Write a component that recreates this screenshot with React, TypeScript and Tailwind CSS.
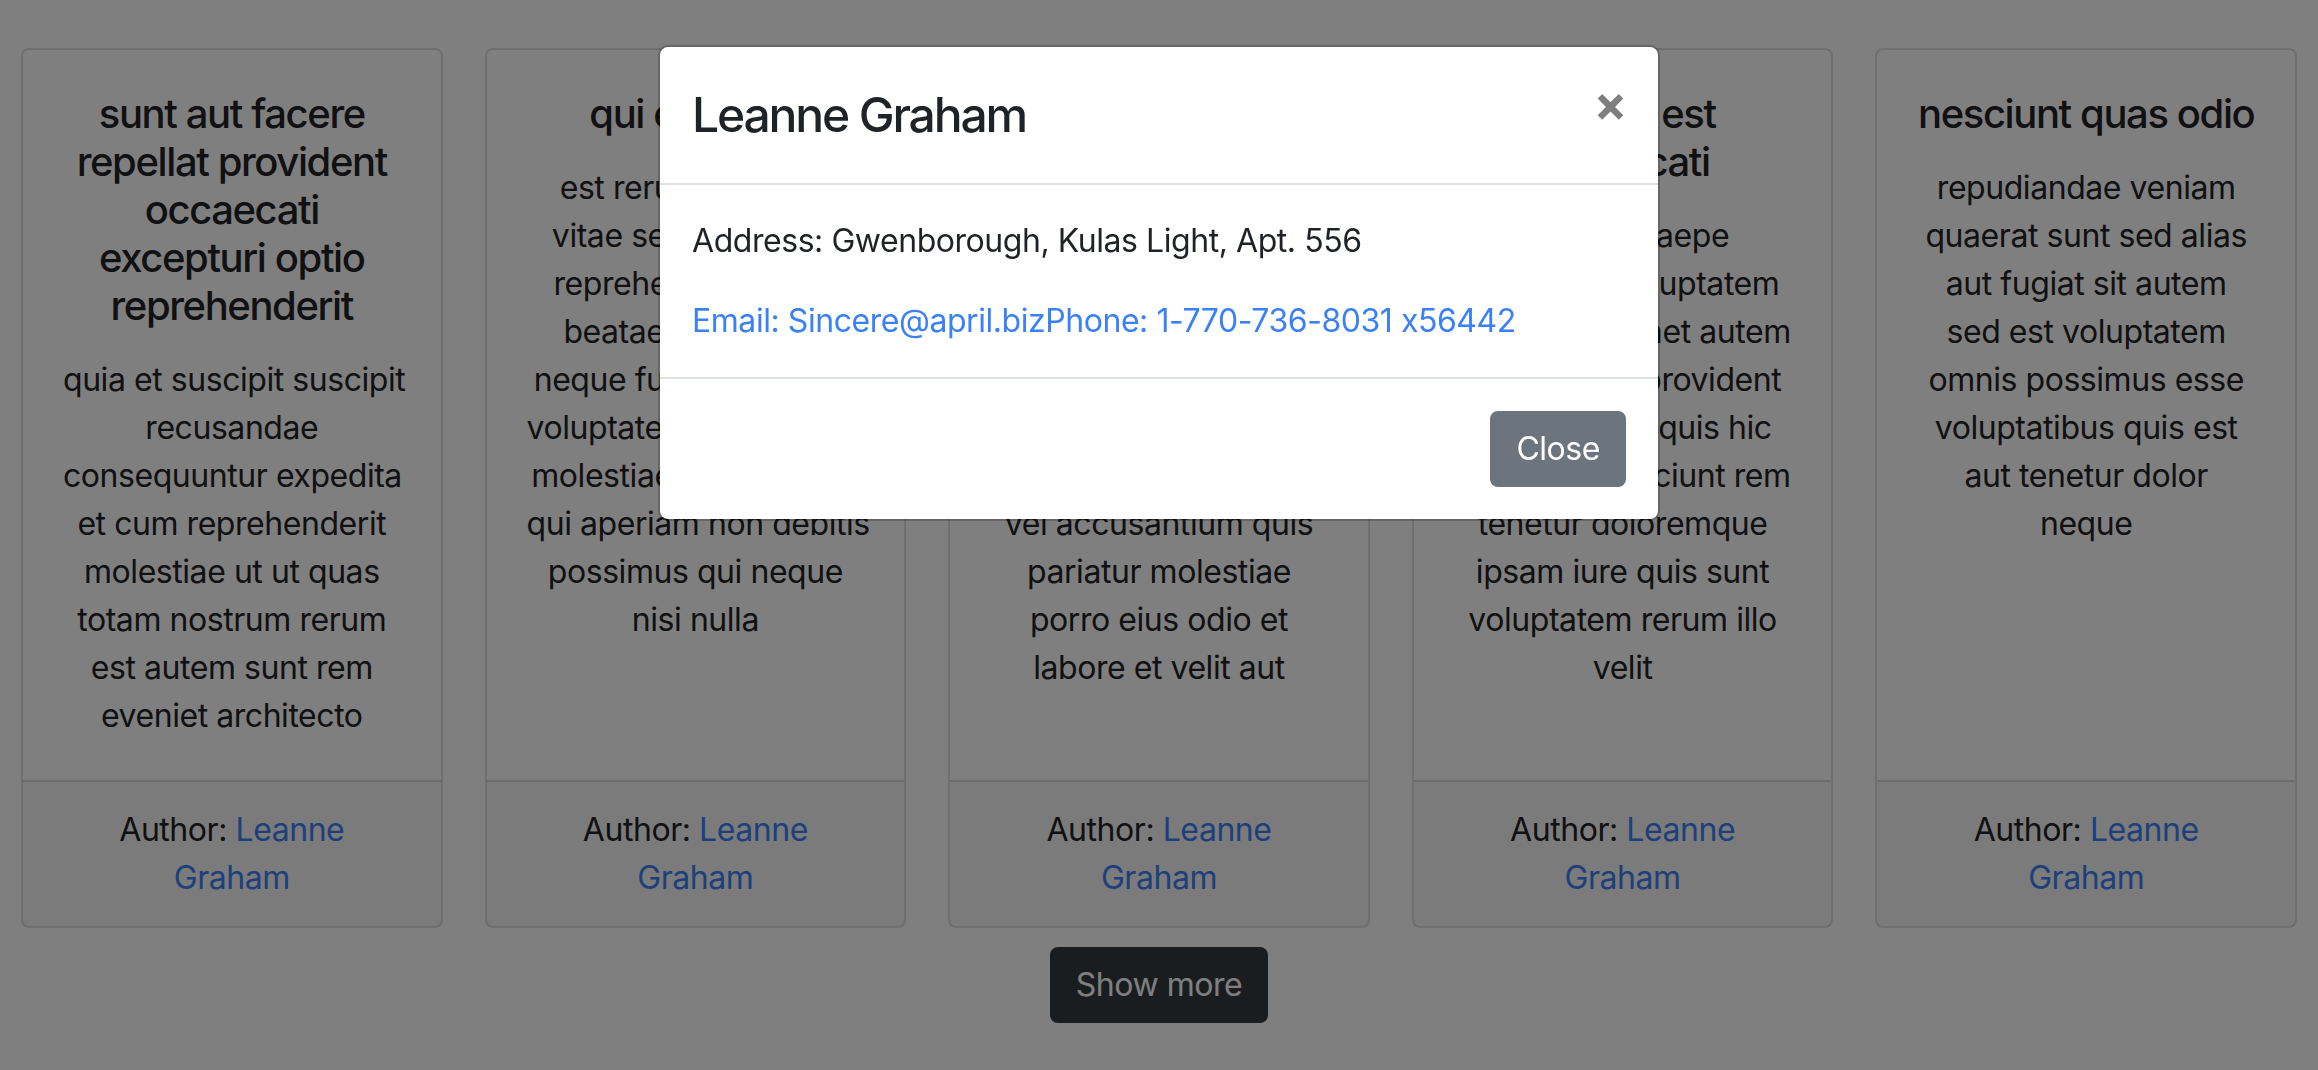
import React from 'react';

type Post = {
  title: string[];
  body: string[];
};

const posts: Post[] = [
  {
    title: ['sunt aut facere', 'repellat provident', 'occaecati', 'excepturi optio', 'reprehenderit'],
    body: [
      'quia et suscipit suscipit',
      'recusandae',
      'consequuntur expedita',
      'et cum reprehenderit',
      'molestiae ut ut quas',
      'totam nostrum rerum',
      'est autem sunt rem',
      'eveniet architecto',
    ],
  },
  {
    title: ['qui est esse'],
    body: [
      'est rerum tempore',
      'vitae sequi sint nihil',
      'reprehenderit dolor',
      'beatae ea dolores',
      'neque fugiat blanditiis',
      'voluptate porro vel nihil',
      'molestiae ut reiciendis',
      'qui aperiam non debitis',
      'possimus qui neque',
      'nisi nulla',
    ],
  },
  {
    title: ['ea molestias quasi', 'exercitationem', 'repellat qui ipsa', 'sit aut'],
    body: [
      'et iusto sed quo iure',
      'voluptatem occaecati',
      'omnis eligendi aut ad',
      'voluptatem doloribus',
      'vel accusantium quis',
      'pariatur molestiae',
      'porro eius odio et',
      'labore et velit aut',
    ],
  },
  {
    title: ['eum et est', 'occaecati'],
    body: [
      'ullam et saepe',
      'reiciendis voluptatem',
      'adipisci sit amet autem',
      'assumenda provident',
      'rerum culpa quis hic',
      'commodi nesciunt rem',
      'tenetur doloremque',
      'ipsam iure quis sunt',
      'voluptatem rerum illo',
      'velit',
    ],
  },
  {
    title: ['nesciunt quas odio'],
    body: [
      'repudiandae veniam',
      'quaerat sunt sed alias',
      'aut fugiat sit autem',
      'sed est voluptatem',
      'omnis possimus esse',
      'voluptatibus quis est',
      'aut tenetur dolor',
      'neque',
    ],
  },
];

const Lines: React.FC<{ lines: string[] }> = ({ lines }) => (
  <>
    {lines.map((l, i) => (
      <React.Fragment key={i}>
        {i > 0 && <br />}
        {l}
      </React.Fragment>
    ))}
  </>
);

const PostCard: React.FC<{ post: Post }> = ({ post }) => (
  <div className="flex flex-col rounded-[8px] border-2 border-[rgba(0,0,0,0.125)] bg-white text-center">
    <div className="flex-1 p-[40px]">
      <h5 className="mb-[26px] whitespace-nowrap text-[40px] font-medium leading-[48px] tracking-[-0.035em]">
        <Lines lines={post.title} />
      </h5>
      <p className="whitespace-nowrap text-[32px] leading-[48px]">
        <Lines lines={post.body} />
      </p>
    </div>
    <div className="border-t-2 border-[rgba(0,0,0,0.125)] bg-[rgba(0,0,0,0.03)] px-[40px] py-[24px] text-[32px] leading-[48px]">
      Author: <a className="text-[#3a80f6]">Leanne</a>
      <br />
      <a className="text-[#3a80f6]">Graham</a>
    </div>
  </div>
);

export default function App() {
  return (
    <div className="relative min-h-[1070px] w-full bg-white text-[#1f2226] tracking-[-0.028em] [font-variant-ligatures:no-contextual] font-['Inter','Liberation_Sans',sans-serif]">
      <div className="px-[21px] pt-[48px]">
        <div className="grid grid-cols-5 gap-x-[42px]">
          {posts.map((p, i) => (
            <PostCard key={i} post={p} />
          ))}
        </div>
        <div className="mt-[19px] flex justify-center">
          <button className="rounded-[8px] border-2 border-[#343a40] bg-[#343a40] px-[24px] py-[12px] text-[32px] leading-[48px] text-white">
            Show more
          </button>
        </div>
      </div>

      {/* backdrop */}
      <div className="fixed inset-0 bg-black/50" />

      {/* modal */}
      <div className="fixed inset-0 flex justify-center pt-[45px]">
        <div className="h-fit w-[1002px] rounded-[10px] border-2 border-[rgba(0,0,0,0.2)] bg-white bg-clip-padding">
          <div className="flex items-start border-b-2 border-[#dee2e6] p-[32px]">
            <h4 className="text-[48px] font-medium leading-[72px] tracking-[-0.045em]">Leanne Graham</h4>
            <button className="ml-auto mr-[-1px] mt-[-12px] text-[50px] font-bold leading-[72px] text-black opacity-50">
              ×
            </button>
          </div>
          <div className="p-[32px] text-[32px] leading-[48px]">
            <p className="mb-[32px]">Address: Gwenborough, Kulas Light, Apt. 556</p>
            <div className="text-[#3a80f6]">Email: Sincere@april.bizPhone: 1-770-736-8031 x56442</div>
          </div>
          <div className="flex justify-end border-t-2 border-[#dee2e6] p-[24px]">
            <button className="m-[8px] rounded-[8px] border-2 border-[#6c757d] bg-[#6c757d] px-[24px] py-[12px] text-[32px] leading-[48px] text-white">
              Close
            </button>
          </div>
        </div>
      </div>
    </div>
  );
}
